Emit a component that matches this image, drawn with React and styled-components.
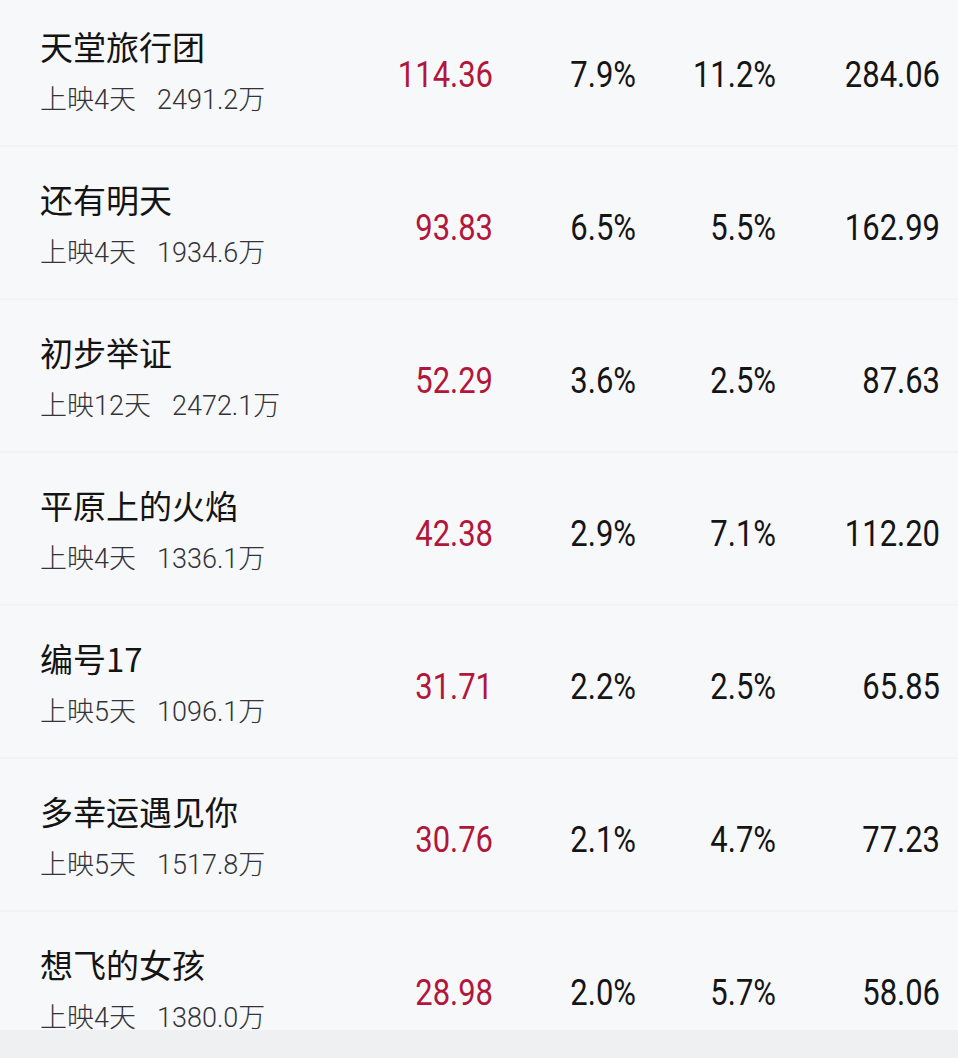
import React from "react";
import styled, { createGlobalStyle } from "styled-components";

const GlobalStyle = createGlobalStyle`
  html, body {
    margin: 0;
    padding: 0;
    background: #eff0f2;
  }
  body {
    font-family: "Noto Sans", "Noto Sans CJK SC", sans-serif;
    -webkit-font-smoothing: antialiased;
  }
`;

const movies = [
  { name: "天堂旅行团", days: "上映4天", total: "2491.2万", box: "114.36", share: "7.9%", seat: "11.2%", shows: "284.06" },
  { name: "还有明天", days: "上映4天", total: "1934.6万", box: "93.83", share: "6.5%", seat: "5.5%", shows: "162.99" },
  { name: "初步举证", days: "上映12天", total: "2472.1万", box: "52.29", share: "3.6%", seat: "2.5%", shows: "87.63" },
  { name: "平原上的火焰", days: "上映4天", total: "1336.1万", box: "42.38", share: "2.9%", seat: "7.1%", shows: "112.20" },
  { name: "编号17", days: "上映5天", total: "1096.1万", box: "31.71", share: "2.2%", seat: "2.5%", shows: "65.85" },
  { name: "多幸运遇见你", days: "上映5天", total: "1517.8万", box: "30.76", share: "2.1%", seat: "4.7%", shows: "77.23" },
  { name: "想飞的女孩", days: "上映4天", total: "1380.0万", box: "28.98", share: "2.0%", seat: "5.7%", shows: "58.06" }
];

const Page = styled.div`
  width: 958px;
  height: 1058px;
  overflow: hidden;
  background: #eff0f2;
`;

const List = styled.div`
  display: flex;
  flex-direction: column;
  margin-top: -6px;
  background: #f7f8fa;
`;

const Row = styled.div`
  display: grid;
  grid-template-columns: 360px 133px 143px 140px 164px;
  align-items: start;
  height: ${p => (p.$last ? 118 : 153)}px;
  box-sizing: border-box;
  padding-right: 18px;
  border-bottom: ${p => (p.$last ? "none" : "2px solid #f2f3f5")};
`;

const NameCell = styled.div`
  display: flex;
  flex-direction: column;
  gap: 18px;
  padding: 32px 0 0 40px;
`;

const Title = styled.div`
  font-family: "Noto Sans CJK SC", sans-serif;
  font-size: 33px;
  line-height: 40px;
  color: #141414;
`;

const Sub = styled.div`
  font-family: "Roboto", "Noto Sans CJK SC", sans-serif;
  font-size: 27px;
  line-height: 32px;
  color: #333338;
  font-weight: 300;
  white-space: nowrap;
`;

const Total = styled.span`
  margin-left: 21px;
`;

const Num = styled.div`
  font-family: "Roboto", sans-serif;
  font-size: 36px;
  line-height: 40px;
  text-align: right;
  padding-top: 61px;
  color: ${p => (p.$red ? "#b2163b" : "#151515")};
  transform: scaleX(0.86);
  transform-origin: right center;
`;

export default function App() {
  return (
    <Page>
      <GlobalStyle />
      <List>
        {movies.map((m, i) => (
          <Row key={m.name} $last={i === movies.length - 1}>
            <NameCell>
              <Title>{m.name}</Title>
              <Sub>
                {m.days}
                <Total>{m.total}</Total>
              </Sub>
            </NameCell>
            <Num $red>{m.box}</Num>
            <Num>{m.share}</Num>
            <Num>{m.seat}</Num>
            <Num>{m.shows}</Num>
          </Row>
        ))}
      </List>
    </Page>
  );
}
